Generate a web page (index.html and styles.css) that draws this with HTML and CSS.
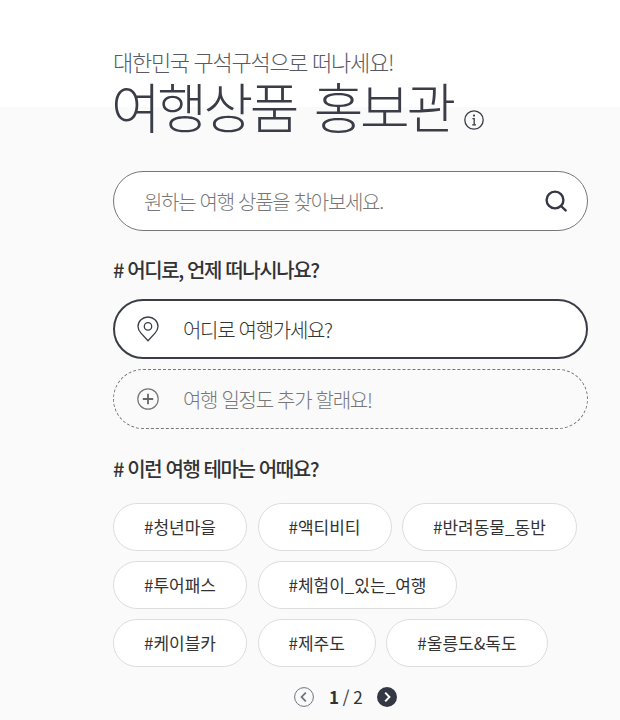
FILE: index.html
```html
<!DOCTYPE html>
<html lang="ko">
<head>
  <meta charset="UTF-8">
  <title>여행상품 홍보관</title>
  <link rel="stylesheet" href="styles.css">
</head>
<body>
  <div class="page">
    <p class="sub-title">대한민국 구석구석으로 떠나세요!</p>
    <h1 class="title"><span>여행상품 홍보관</span>
      <svg class="info-icon" width="20" height="20" viewBox="0 0 20 20" fill="none" stroke="#3a3d47">
        <circle cx="10" cy="10" r="9.2" stroke-width="1.3"/>
        <circle cx="10" cy="5.6" r="1.1" fill="#3a3d47" stroke="none"/>
        <path d="M8.4 8.6H10.2V14.8M8.2 14.8H12" stroke-width="1.3"/>
      </svg>
    </h1>

    <div class="search-box">
      <span class="search-text">원하는 여행 상품을 찾아보세요.</span>
      <svg width="22" height="22" viewBox="0 0 22 22" fill="none" stroke="#333844" stroke-width="2.4">
        <circle cx="10" cy="10" r="8.4"/>
        <path d="M16 16L20.6 20.4" stroke-linecap="round"/>
      </svg>
    </div>

    <h2 class="section-title"># 어디로, 언제 떠나시나요?</h2>
    <div class="field field-main">
      <svg width="22" height="26" viewBox="0 0 22 26" fill="none" stroke="#3a3d47" stroke-width="1.3">
        <path d="M11 24.8L4.2 17.4C1.8 14.8 1 12.8 1 10.6C1 5 5.6 1 11 1C16.4 1 21 5 21 10.6C21 12.8 20.2 14.8 17.8 17.4Z"/>
        <circle cx="11" cy="10.4" r="3.7"/>
      </svg>
      <span>어디로 여행가세요?</span>
    </div>
    <div class="field field-add">
      <svg width="22" height="22" viewBox="0 0 22 22" fill="none" stroke="#777" stroke-width="1.2">
        <circle cx="11" cy="11" r="10.2"/>
        <path d="M11 5.8V16.2M5.8 11H16.2" stroke="#666" stroke-width="1.8"/>
      </svg>
      <span>여행 일정도 추가 할래요!</span>
    </div>

    <h2 class="section-title theme-title"># 이런 여행 테마는 어때요?</h2>
    <div class="tag-list">
      <a class="tag">#청년마을</a>
      <a class="tag">#액티비티</a>
      <a class="tag">#반려동물_동반</a>
      <a class="tag">#투어패스</a>
      <a class="tag">#체험이_있는_여행</a>
      <a class="tag">#케이블카</a>
      <a class="tag">#제주도</a>
      <a class="tag">#울릉도&amp;독도</a>
    </div>

    <div class="pager">
      <svg width="20" height="20" viewBox="0 0 20 20" fill="none">
        <circle cx="10" cy="10" r="9.4" stroke="#6d7484"/>
        <path d="M11.8 5.6L7.6 10L11.8 14.4" stroke="#6d7484" stroke-width="1.8"/>
      </svg>
      <span class="pager-num"><b>1</b> / 2</span>
      <svg width="20" height="20" viewBox="0 0 20 20" fill="none">
        <circle cx="10" cy="10" r="10" fill="#333844"/>
        <path d="M8.2 5.6L12.4 10L8.2 14.4" stroke="#fff" stroke-width="2"/>
      </svg>
    </div>
  </div>
</body>
</html>
```

FILE: styles.css
```css
html, body {
  margin: 0;
  padding: 0;
}

body {
  height: 720px;
  overflow: hidden;
  background: linear-gradient(#fff 107px, #fafafa 107px);
  font-family: "Noto Sans CJK KR", "Noto Sans", sans-serif;
  color: #333;
}

.page {
  width: 475px;
  margin-left: 113px;
  padding-top: 46px;
}

.sub-title {
  margin: 0;
  font-size: 22px;
  line-height: 30px;
  font-weight: 300;
  letter-spacing: -1.3px;
  color: #555a66;
}

.title {
  display: flex;
  align-items: flex-end;
  gap: 11px;
  margin: 0 0 0 -2px;
  font-size: 54px;
  line-height: 60px;
  font-weight: 300;
  letter-spacing: -3.4px;
  word-spacing: 6px;
  color: #3a3d47;
}

.info-icon {
  margin-bottom: 6px;
}

.search-box {
  display: flex;
  align-items: center;
  justify-content: space-between;
  box-sizing: border-box;
  height: 60px;
  margin-top: 35px;
  padding: 0 20px 0 30px;
  background: #fff;
  border: 1px solid #777;
  border-radius: 30px;
}

.search-text {
  font-size: 20px;
  font-weight: 300;
  letter-spacing: -1.3px;
  color: #777;
}

.section-title {
  margin: 24px 0 0;
  font-size: 20px;
  line-height: 30px;
  font-weight: 500;
  letter-spacing: -1.4px;
  color: #333;
}

.field {
  display: flex;
  align-items: center;
  gap: 24px;
  box-sizing: border-box;
  height: 60px;
  border-radius: 30px;
  font-size: 20px;
  font-weight: 300;
  letter-spacing: -1.3px;
}

.field-main {
  margin-top: 14px;
  padding-left: 22px;
  background: #fff;
  border: 2px solid #3a3d47;
  color: #333;
}

.field-add {
  margin-top: 10px;
  padding-left: 23px;
  border: 1px dashed #777;
  color: #777;
}

.theme-title {
  margin-top: 25px;
}

.tag-list {
  display: flex;
  flex-wrap: wrap;
  gap: 10px 10.5px;
  margin-top: 19px;
}

.tag {
  box-sizing: border-box;
  height: 48px;
  padding: 0 30px;
  background: #fff;
  border: 1px solid #ddd;
  border-radius: 24px;
  font-size: 17px;
  line-height: 46px;
  color: #333;
}

.pager {
  display: flex;
  align-items: center;
  justify-content: center;
  gap: 15px;
  margin-top: 20px;
  padding-right: 10px;
}

.pager-num {
  font-size: 17px;
  line-height: 20px;
  letter-spacing: -0.5px;
  color: #333;
}
```
